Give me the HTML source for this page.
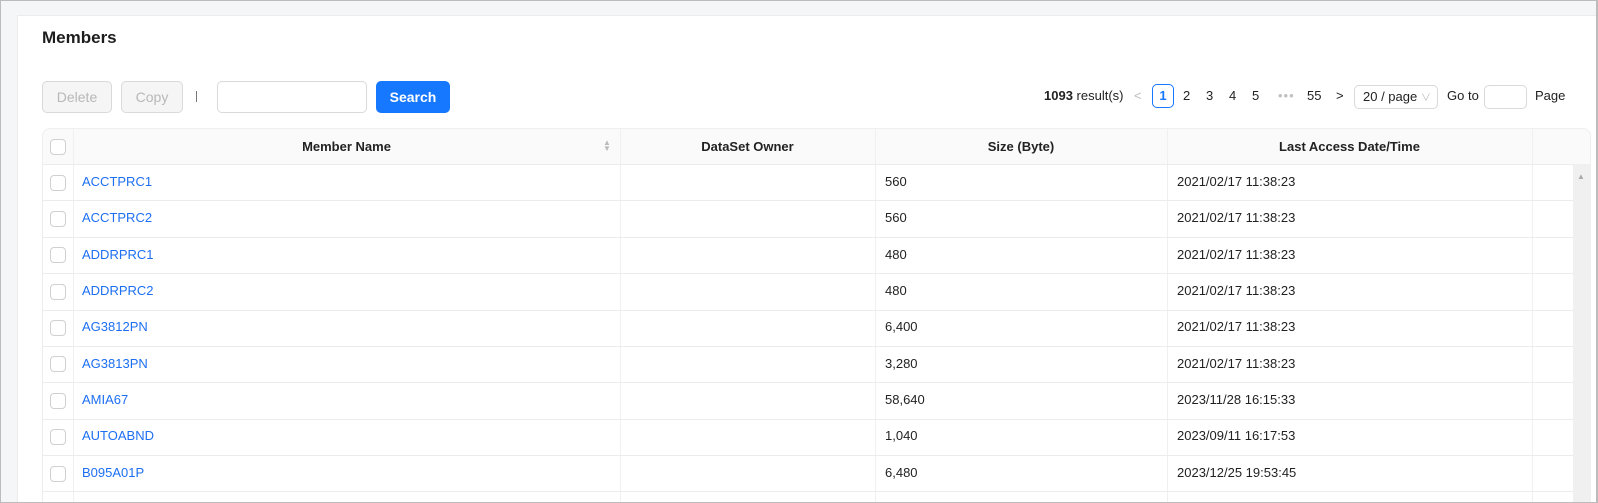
<!DOCTYPE html>
<html><head><style>
*{box-sizing:border-box;margin:0;padding:0}
body{width:1598px;height:503px;overflow:hidden;background:#f5f6f8;font-family:"Liberation Sans","Noto Sans CJK SC",sans-serif;font-size:13px;color:#222;position:relative}
.frame{position:absolute;left:0;top:0;width:1598px;height:503px;border:1px solid #bcbcbc;border-right:2px solid #bcbcbc;z-index:10;pointer-events:none}
.card{position:absolute;left:17px;top:15px;width:1580px;height:488px;background:#fff;border-left:1px solid #ececec;border-top:1px solid #ececec}
.abs{position:absolute}
h1{position:absolute;left:42px;top:28px;font-size:17px;font-weight:bold;color:#1d1d1d}
.btn{position:absolute;top:81px;height:32px;border:1px solid #d9d9d9;border-radius:5px;background:#f5f5f5;color:#b8b8b8;font-size:14px;text-align:center;line-height:30px}
.search{background:#1677ff;border-color:#1677ff;color:#fff;font-weight:bold}
.inp{position:absolute;border:1px solid #d9d9d9;border-radius:5px;background:#fff}
.pg{position:absolute;top:86px;font-size:13px;line-height:20px}
.thead{position:absolute;left:42px;top:128px;width:1549px;height:37px;background:#fafafa;border:1px solid #efefef;border-radius:8px 8px 0 0}
.th{position:absolute;top:128px;height:37px;line-height:37px;font-weight:bold;text-align:center;font-size:13px;color:#222}
.vl{position:absolute;width:1px;background:#f0f0f0}
.hl{position:absolute;left:42px;width:1531px;height:1px;background:#ececec}
.cb{position:absolute;left:50px;width:16px;height:16px;border:1px solid #d0d0d0;border-radius:4px;background:#fff}
.cell{position:absolute;line-height:20px;font-size:13px}
.link{color:#1d6ff2}
</style></head><body>
<div class="card"></div>
<h1>Members</h1>
<div class="btn" style="left:42px;width:70px">Delete</div>
<div class="btn" style="left:121px;width:62px">Copy</div>
<div class="abs" style="left:196px;top:91px;width:1px;height:11px;background:#777"></div>
<div class="inp" style="left:217px;top:81px;width:150px;height:32px"></div>
<div class="btn search" style="left:376px;top:81px;width:74px">Search</div>

<div class="pg" style="left:1044px"><b>1093</b> result(s)</div>
<div class="pg" style="left:1134px;color:#bbb">&lt;</div>
<div class="abs" style="left:1152px;top:84px;width:22px;height:24px;border:1px solid #1677ff;border-radius:5px;color:#1677ff;font-weight:bold;text-align:center;line-height:22px">1</div>
<div class="pg" style="left:1183px">2</div>
<div class="pg" style="left:1206px">3</div>
<div class="pg" style="left:1229px">4</div>
<div class="pg" style="left:1252px">5</div>
<div class="pg" style="left:1278px;color:#c0c0c0;letter-spacing:1px">•••</div>
<div class="pg" style="left:1307px">55</div>
<div class="pg" style="left:1336px">&gt;</div>
<div class="inp" style="left:1354px;top:85px;width:84px;height:24px;line-height:22px;padding-left:8px">20 / page <span style="color:#bbb;font-size:10px">∨</span></div>
<div class="pg" style="left:1447px">Go to</div>
<div class="inp" style="left:1484px;top:85px;width:43px;height:24px"></div>
<div class="pg" style="left:1535px">Page</div>

<div class="thead"></div>
<div class="cb" style="top:139px"></div>
<div class="th" style="left:73px;width:547px">Member Name</div>
<div class="abs" style="left:603px;top:140px;font-size:8px;color:#bbb;line-height:6px">▲<br>▼</div>
<div class="th" style="left:620px;width:255px">DataSet Owner</div>
<div class="th" style="left:875px;width:292px">Size (Byte)</div>
<div class="th" style="left:1167px;width:365px">Last Access Date/Time</div>
<div class="vl" style="left:73px;top:129px;height:374px"></div>
<div class="vl" style="left:620px;top:129px;height:374px"></div>
<div class="vl" style="left:875px;top:129px;height:374px"></div>
<div class="vl" style="left:1167px;top:129px;height:374px"></div>
<div class="vl" style="left:1532px;top:129px;height:374px"></div>
<div class="abs" style="left:1573px;top:165px;width:18px;height:338px;background:#f0f0f0"></div>
<div class="abs" style="left:1577px;top:172px;font-size:8px;color:#aaa">▲</div>
<div class="abs" style="left:42px;top:165px;width:1px;height:338px;background:#ececec"></div>

<div class="hl" style="top:164px"></div>
<div class="hl" style="top:200px"></div>
<div class="hl" style="top:237px"></div>
<div class="hl" style="top:273px"></div>
<div class="hl" style="top:310px"></div>
<div class="hl" style="top:346px"></div>
<div class="hl" style="top:382px"></div>
<div class="hl" style="top:419px"></div>
<div class="hl" style="top:455px"></div>
<div class="hl" style="top:491px"></div>

<div class="cb" style="top:175px"></div><div class="cell link" style="left:82px;top:172px">ACCTPRC1</div><div class="cell" style="left:885px;top:172px">560</div><div class="cell" style="left:1177px;top:172px">2021/02/17 11:38:23</div>
<div class="cb" style="top:211px"></div><div class="cell link" style="left:82px;top:208px">ACCTPRC2</div><div class="cell" style="left:885px;top:208px">560</div><div class="cell" style="left:1177px;top:208px">2021/02/17 11:38:23</div>
<div class="cb" style="top:247px"></div><div class="cell link" style="left:82px;top:245px">ADDRPRC1</div><div class="cell" style="left:885px;top:245px">480</div><div class="cell" style="left:1177px;top:245px">2021/02/17 11:38:23</div>
<div class="cb" style="top:284px"></div><div class="cell link" style="left:82px;top:281px">ADDRPRC2</div><div class="cell" style="left:885px;top:281px">480</div><div class="cell" style="left:1177px;top:281px">2021/02/17 11:38:23</div>
<div class="cb" style="top:320px"></div><div class="cell link" style="left:82px;top:317px">AG3812PN</div><div class="cell" style="left:885px;top:317px">6,400</div><div class="cell" style="left:1177px;top:317px">2021/02/17 11:38:23</div>
<div class="cb" style="top:356px"></div><div class="cell link" style="left:82px;top:354px">AG3813PN</div><div class="cell" style="left:885px;top:354px">3,280</div><div class="cell" style="left:1177px;top:354px">2021/02/17 11:38:23</div>
<div class="cb" style="top:393px"></div><div class="cell link" style="left:82px;top:390px">AMIA67</div><div class="cell" style="left:885px;top:390px">58,640</div><div class="cell" style="left:1177px;top:390px">2023/11/28 16:15:33</div>
<div class="cb" style="top:429px"></div><div class="cell link" style="left:82px;top:426px">AUTOABND</div><div class="cell" style="left:885px;top:426px">1,040</div><div class="cell" style="left:1177px;top:426px">2023/09/11 16:17:53</div>
<div class="cb" style="top:466px"></div><div class="cell link" style="left:82px;top:463px">B095A01P</div><div class="cell" style="left:885px;top:463px">6,480</div><div class="cell" style="left:1177px;top:463px">2023/12/25 19:53:45</div>
<div class="frame"></div>
</body></html>
